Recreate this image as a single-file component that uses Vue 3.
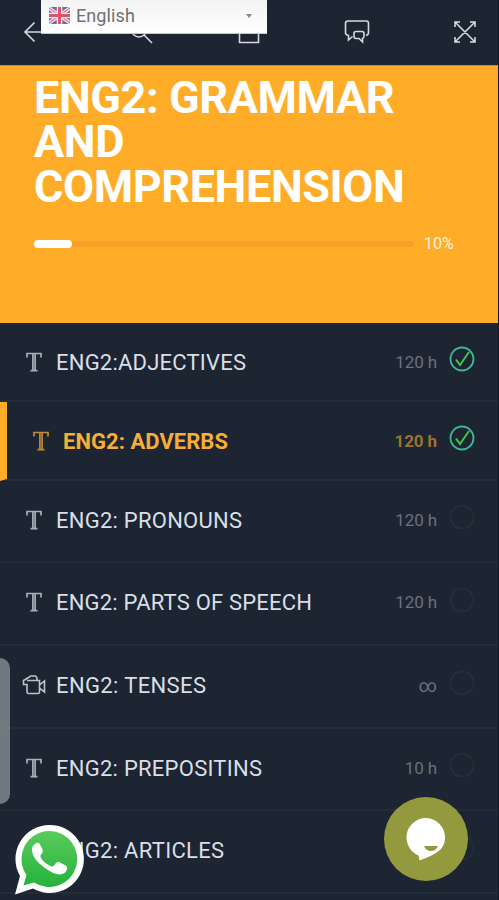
<script setup>
const lessons = [
  { title: 'ENG2:ADJECTIVES', time: '120 h', done: true, size: 79, w: 190 },
  { title: 'ENG2: ADVERBS', time: '120 h', done: true, active: true, size: 79, w: 165 },
  { title: 'ENG2: PRONOUNS', time: '120 h', size: 82, w: 186 },
  { title: 'ENG2: PARTS OF SPEECH', time: '120 h', size: 83, w: 256 },
  { title: 'ENG2: TENSES', time: '∞', video: true, size: 83, w: 150 },
  { title: 'ENG2: PREPOSITINS', time: '10 h', size: 82, w: 206 },
  { title: 'ENG2: ARTICLES', time: '', size: 83, w: 168 },
]
const progress = 10
</script>

<template>
  <main class="screen">
    <header class="toolbar">
      <svg class="back" width="24" height="24" viewBox="0 0 24 24"><path d="M11.500 2.500 2 12l9.500 9.500M2 12h22" /></svg>
      <svg class="search" width="24" height="24" viewBox="0 0 24 24"><circle cx="9" cy="9.500" r="7.500" /><path d="m14 15 8 8" /></svg>
      <svg class="home" width="24" height="24" viewBox="0 0 24 24"><path d="M2.500 8v14.500h19V8" /></svg>
      <svg class="chat" width="26" height="26" viewBox="0 0 26 26"><path d="M4.500 18v-1.500q-3-.5-3-3V4.500q0-2.500 2.500-2.500h18.500q2 0 2 2.500v9q0 2.500-2.500 3M4.500 17v4l4-3.500" /><path d="M12 12.500h6q2 0 2 2v3q0 1.500-1.500 1.800v3.500L15 19.500h-3q-2 0-2-2v-3q0-2 2-2Z" /></svg>
      <svg class="expand" width="22" height="22" viewBox="0 0 22 22"><path d="m1.500 1.500 19 19M20.500 1.500l-19 19M1 6V1h5M16 1h5v5M1 16v5h5M16 21h5v-5" /></svg>
    </header>

    <div class="language">
      <svg class="flag" width="21" height="17" viewBox="0 0 21 17">
        <rect width="21" height="17" rx="2" fill="#6770a7" />
        <path d="m0 1 21 15M21 1 0 16" stroke="#f0e6ee" stroke-width="3.500" />
        <path d="m0 1 21 15M21 1 0 16" stroke="#dc7b91" stroke-width="1.200" />
        <path d="M10.500 0v17M0 8.500h21" stroke="#f7e9ed" stroke-width="5.500" />
        <path d="M10.500 0v17M0 8.500h21" stroke="#e35469" stroke-width="3" />
      </svg>
      <span>English</span>
      <i class="caret"></i>
    </div>

    <section class="hero">
      <h1><span>ENG2: GRAMMAR</span><span>AND</span><span>COMPREHENSION</span></h1>
      <div class="progress">
        <div class="track"><div class="fill" :style="{ width: progress + '%' }"></div></div>
        <span>{{ progress }}%</span>
      </div>
    </section>

    <section class="lessons">
      <article v-for="item in lessons" :key="item.title" class="lesson" :class="{ active: item.active, open: !item.done }" :style="{ height: item.size + 'px' }">
        <svg v-if="item.video" class="kind" width="24" height="22" viewBox="0 0 24 22"><path d="M5 6.500h12.500V18q0 1.500-1.500 1.500H6.500Q5 19.500 5 18v-7.500H1.500v-4L5 4.500M5 5q0-1.500 2-1.500Q7.500 2 9 2h4q1.500 0 2 2.500v2M17.500 11l5-4v11l-5-4" /></svg>
        <svg v-else class="kind letter" width="24" height="22" viewBox="0 0 24 22"><path d="M5 6.500V2.500h14v4M10.900 2.500v17M13.100 2.500v17M8.500 19.700h7" /></svg>
        <svg class="name" height="30" :width="item.w + 4"><text x="0" y="23" :textLength="item.w" lengthAdjust="spacing">{{ item.title }}</text></svg>
        <span class="time" :class="{ infinite: item.video }">{{ item.time }}</span>
        <svg class="status" :class="{ done: item.done }" width="26" height="26" viewBox="0 0 26 26"><circle cx="13" cy="13" r="11.500" /><path v-if="item.done" d="m7 13.500 4 5.500 9-13" /></svg>
      </article>
    </section>

    <div class="handle"></div>
    <svg class="whatsapp" width="74" height="76" viewBox="0 0 74 76">
      <defs><linearGradient id="leaf" x2="0" y2="1"><stop stop-color="#59cb5c" /><stop offset="1" stop-color="#25b23c" /></linearGradient></defs>
      <path d="M36.500 2A34 34 0 1 1 20 65.500L2 71.500 7 53A34 34 0 0 1 36.500 2Z" fill="#fff" />
      <path d="M36.500 8A28 28 0 1 1 21 59.500L10.500 62.500 13.500 52A28 28 0 0 1 36.500 8Z" fill="url(#leaf)" />
      <path d="M22 21q-3.500 2-3 7 1 8 11 15.500 10 8 17 8 5-.5 6.500-4 1-3 0-4.500l-7.500-4q-2-.5-3 1l-2.500 3q-1 1-3 0-7-3-10-9-.5-1.500 1-3 2-2.500 1-4.500l-3-6q-2-1.500-4.500.5Z" fill="#fff" />
    </svg>
    <div class="assistant">
      <svg width="42" height="44" viewBox="0 0 42 44"><path d="M20.500 1A19.500 19.500 0 0 1 40 20.500c0 11-6.500 16-25.500 23l-1-5A19.500 19.500 0 0 1 20.500 1Z" fill="#fff" /><path d="M19 29h14q-2 5-7 5t-7-5Z" fill="#93993d" /></svg>
    </div>
  </main>
</template>

<style>
body { margin: 0; background: #1d2632; }
</style>

<style scoped>
* { box-sizing: border-box; }
.screen { position: relative; width: 499px; height: 900px; overflow: hidden; background: #1c2531; border-right: 1px solid #111a27; font-family: Roboto, sans-serif; }
.toolbar { height: 65px; display: grid; grid-template-columns: 107px 108px 108px 108px 1fr; align-items: center; padding: 0 0 2px 23px; }
.toolbar svg { fill: none; stroke: #d4dae4; stroke-width: 1.600; }
.toolbar .chat { margin-left: -2px; }
.toolbar .home { margin-left: -1px; }
.language { position: absolute; left: 41px; top: 0; width: 226px; height: 34px; display: flex; align-items: center; padding: 0 15px 2px 8px; background: linear-gradient(#f3f3f3, #fff); color: #717171; font-size: 18px; border-bottom: 1px solid #c8c8c8; }
.language span { margin-left: 6px; letter-spacing: .1px; }
.caret { margin-left: auto; border: 3.500px solid transparent; border-top: 4px solid #888; border-bottom: 0; }
.hero { height: 258px; background: #ffad29; padding: 10px 34px 0; color: #fff; border-top: 1px solid #c48c35; }
h1 { margin: 0; font-size: 45px; line-height: 44.300px; font-weight: 700; letter-spacing: -.4px; }
h1 span { display: block; white-space: nowrap; }
.progress { display: flex; align-items: center; margin-top: 25px; height: 20px; }
.track { width: 380px; height: 6px; border-radius: 4px; background: #f5a027; }
.fill { height: 8px; margin-top: -1px; border-radius: 4px; background: #fff; }
.progress > span { margin-left: 10px; font-size: 16px; color: #fff3df; }
.lesson { display: flex; align-items: center; padding: 0 23px 0 22px; border-bottom: 2px solid #232d38; color: #d9dfe9; }
.lesson.open { padding-bottom: 3px; }
.lesson.active { border-left: 7px solid #ffad29; color: #f7ae37; font-weight: 700; }
.kind { flex: none; fill: none; stroke: currentColor; stroke-width: 1.600; opacity: .85; }
.letter { stroke-width: 1.700; opacity: .75; }
.name { flex: none; margin-left: 10px; font-size: 22px; fill: currentColor; }
.time { margin-left: auto; font-size: 17px; letter-spacing: -.1px; color: #697280; }
.active .time { color: #9b732f; }
.time.infinite { font-size: 18px; }
.status { flex: none; margin: -5px 0 0 12px; fill: none; stroke: #26303b; stroke-width: 1.500; }
.status.done circle { stroke: #43b596; stroke-width: 1.800; }
.status.done path { stroke: #42c54a; stroke-width: 2; }
.handle { position: absolute; left: -10px; top: 658px; width: 20px; height: 146px; border-radius: 10px; background: rgba(139, 144, 151, .78); }
.whatsapp { position: absolute; left: 13px; top: 823px; }
.assistant { position: absolute; left: 384px; top: 797px; width: 84px; height: 84px; border-radius: 50%; background: #93993d; display: grid; place-items: center; }
</style>
